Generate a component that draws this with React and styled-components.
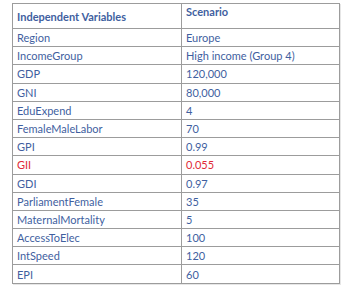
import React from "react";
import styled, { createGlobalStyle } from "styled-components";

const Global = createGlobalStyle`
  html, body { margin: 0; padding: 0; background: #ffffff; }
  body { font-family: Lato, "Open Sans", sans-serif; }
`;

const Page = styled.div`
  padding: 3px 0 0 12px;
  width: 356px;
  height: 288px;
  box-sizing: border-box;
`;

const Table = styled.table`
  border-collapse: collapse;
  width: 328px;
  table-layout: fixed;
  font-family: Lato, "Open Sans", sans-serif;
  font-size: 11px;
  color: #3f5f9f;
  border: 1px solid #9c9c9c;
  box-shadow: 1px 1px 0 #e6e6e6;
`;

const HeadCell = styled.th`
  height: 23px;
  padding: ${(p) => (p.$top ? "1px 4px 0 4px" : "0 4px")};
  vertical-align: ${(p) => (p.$top ? "top" : "middle")};
  text-align: left;
  font-weight: 700;
  border: 1px solid #9c9c9c;
  line-height: 13px;
  width: ${(p) => p.$w || "auto"};
`;

const Row = styled.tr`
  height: 18.2px;
`;

const Cell = styled.td`
  padding: 0 4px;
  border: 1px solid #9c9c9c;
  color: ${(p) => (p.$alert ? "#e02a36" : "#3f5f9f")};
  line-height: 13px;
  white-space: nowrap;
`;

const rows = [
  ["Region", "Europe"],
  ["IncomeGroup", "High income (Group 4)"],
  ["GDP", "120,000"],
  ["GNI", "80,000"],
  ["EduExpend", "4"],
  ["FemaleMaleLabor", "70"],
  ["GPI", "0.99"],
  ["GII", "0.055", true],
  ["GDI", "0.97"],
  ["ParliamentFemale", "35"],
  ["MaternalMortality", "5"],
  ["AccessToElec", "100"],
  ["IntSpeed", "120"],
  ["EPI", "60"],
];

export default function App() {
  return (
    <>
      <Global />
      <Page>
        <Table>
          <thead>
            <tr>
              <HeadCell $w="160px">Independent Variables</HeadCell>
              <HeadCell $top>Scenario</HeadCell>
            </tr>
          </thead>
          <tbody>
            {rows.map(([k, v, alert]) => (
              <Row key={k}>
                <Cell $alert={alert}>{k}</Cell>
                <Cell $alert={alert}>{v}</Cell>
              </Row>
            ))}
          </tbody>
        </Table>
      </Page>
    </>
  );
}
